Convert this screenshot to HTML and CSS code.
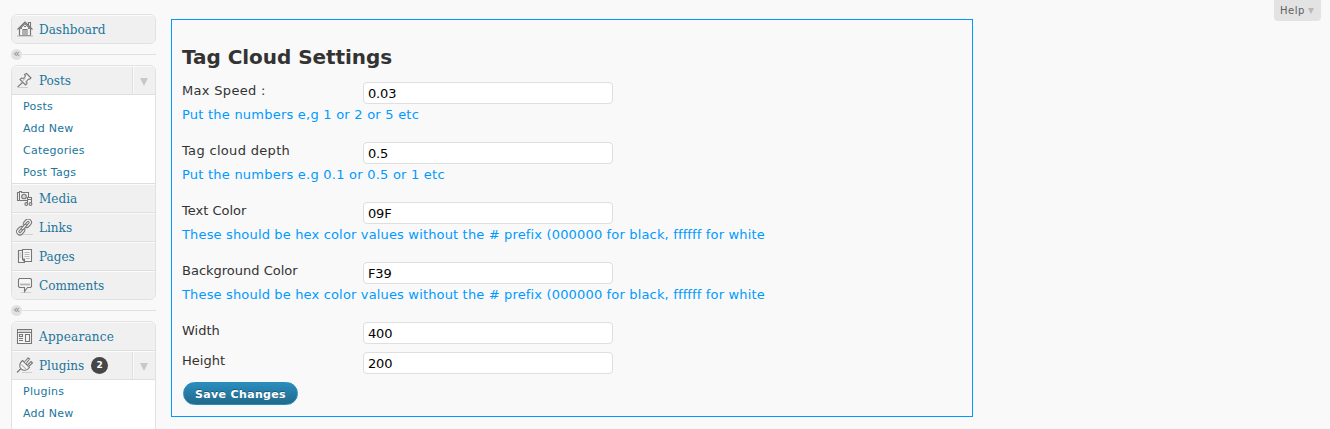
FILE: index.html
```html
<!DOCTYPE html>
<html lang="en">
<head>
<meta charset="utf-8">
<title>Tag Cloud Settings</title>
<link rel="stylesheet" href="styles.css">
</head>
<body>
<div class="page">
  <nav class="sidebar">
    <div class="menu">
      <a class="item">
        <svg class="icon" viewBox="0 0 18 18"><path class="fill" d="M3.500 9 9 3.500 14.500 9v6.500h-11z"/><path d="M1.500 9.500 9 2l7.500 7.500M3.500 8.500v7h11v-7M12.500 5V2.500h2V7M7 15.500V9.500h4v6M9 9.500v6M5 8.500h1M12 8.500h1M8 6.500h2"/><path class="soft" d="M1 16h16"/></svg>
        <span class="name">Dashboard</span>
      </a>
    </div>
    <div class="separator"><span class="fold">«</span></div>
    <div class="menu">
      <a class="item">
        <svg class="icon" viewBox="0 0 18 18"><path class="base" d="M2 15.500h10"/><path class="fill" d="M8.500 2.500 10.500 1.500l4.500 4.500-1.500 1.200-1-.2-2 2.500.5 2-1.500 1.500-5.500-5.500L5.500 6l2 .5 2-2.500z"/><path class="soft" d="M7 8.500 9.500 6M9 10.500l2-2.500"/><path d="M6.500 10.500 1.500 15.200"/></svg>
        <span class="name">Posts</span><span class="toggle"></span>
      </a>
      <div class="submenu"><a>Posts</a><a>Add New</a><a>Categories</a><a>Post Tags</a></div>
      <a class="item">
        <svg class="icon" viewBox="0 0 18 18"><path class="fill" d="M1.500 2.500h2v-1h2v1h7v8h-11z"/><path d="M3.500 3v7"/><circle class="shade" cx="8" cy="6.500" r="2.300"/><path class="fill" d="M11.500 14V7.500h4v6M11.500 9.500h4"/><circle class="fill" cx="10.300" cy="14" r="1.400"/><circle class="fill" cx="14.500" cy="14" r="1.400"/></svg>
        <span class="name">Media</span>
      </a>
      <a class="item">
        <svg class="icon" viewBox="0 0 18 18"><path class="base" d="M5 15.500h12"/><g transform="translate(-.5 -.5) rotate(-48 8.500 8.500)"><rect class="fill" x="-1" y="5.200" width="9" height="6.600" rx="3.300"/><rect x="1.200" y="7.500" width="4.800" height="2" rx="1"/><rect class="fill" x="9" y="5.200" width="9" height="6.600" rx="3.300"/><rect x="11" y="7.500" width="4.800" height="2" rx="1"/><rect class="fill" x="5.200" y="7.300" width="6.600" height="2.400" rx="1.200"/></g></svg>
        <span class="name">Links</span>
      </a>
      <a class="item">
        <svg class="icon" viewBox="0 0 18 18"><path class="fill" d="M2.500 2.500h6v12h-6z"/><path class="fill" d="M6.500 1.500h9v12h-7l-2-2zM6.500 11h2v2.500"/><path class="soft" d="M8.500 4.500h5M8.500 6.500h5M8.500 8.500h5M10 10.500h3.500M3.500 5h2M3.500 7h2M3.500 9h2"/></svg>
        <span class="name">Pages</span>
      </a>
      <a class="item">
        <svg class="icon" viewBox="0 0 18 18"><path class="base" d="M5 16.500h10"/><path class="fill" d="M3.500 2.500h11l1 1v7l-1 1H11.500L8.500 15.500v-4h-5l-1-1v-7z"/><path class="soft" d="M4 8h10M4 9h10"/></svg>
        <span class="name">Comments</span>
      </a>
    </div>
    <div class="separator"><span class="fold">«</span></div>
    <div class="menu">
      <a class="item">
        <svg class="icon" viewBox="0 0 18 18"><path class="fill" d="M1.500 1.500h14v14h-14z"/><path d="M1.500 4.500h14M9.500 6.500h4v7h-4zM3.500 6.500h3v2h-3zM3 10.500h4M3 12.500h4"/><path class="soft" d="M3 3h11"/></svg>
        <span class="name appearance">Appearance</span>
      </a>
      <a class="item">
        <svg class="icon" viewBox="0 0 18 18"><path class="base" d="M6 15.500h10"/><path d="M1 15.500 5 11.500"/><path class="fill" d="M6.500 3.500 13.500 10.500C11 13.500 7.500 14.200 5 11.800S4 5.500 6.500 3.500z"/><path class="fill" d="M8.500 5l3.500-4 1.500 1L10.200 6.500M11.500 8 15 4.500 16.500 6l-4 3.500"/><path class="soft" d="M5.500 7.500 9.800 11.800"/></svg>
        <span class="name">Plugins</span><span class="count">2</span><span class="toggle"></span>
      </a>
      <div class="submenu"><a>Plugins</a><a>Add New</a></div>
      <div class="submenu-rest"></div>
    </div>
  </nav>

  <main class="panel">
    <h2>Tag Cloud Settings</h2>
    <div class="row"><label class="wide">Max Speed :</label><input type="text" value="0.03"></div>
    <p class="hint wide">Put the numbers e,g 1 or 2 or 5 etc</p>
    <div class="row"><label class="wide">Tag cloud depth</label><input type="text" value="0.5"></div>
    <p class="hint wide">Put the numbers e.g 0.1 or 0.5 or 1 etc</p>
    <div class="row"><label>Text Color</label><input type="text" value="09F"></div>
    <p class="hint">These should be hex color values without the # prefix (000000 for black, ffffff for white</p>
    <div class="row"><label>Background Color</label><input type="text" value="F39"></div>
    <p class="hint">These should be hex color values without the # prefix (000000 for black, ffffff for white</p>
    <div class="row"><label>Width</label><input type="text" value="400"></div>
    <div class="row"><label>Height</label><input type="text" value="200"></div>
    <button class="save">Save Changes</button>
  </main>

  <a class="help">Help<span class="arrow"></span></a>
</div>
</body>
</html>
```
FILE: styles.css
```css
* { box-sizing: border-box; }
body {
  margin: 0;
  background: #f9f9f9;
  color: #333;
  font-family: Verdana, "DejaVu Sans", sans-serif;
}
.page {
  display: flex;
  align-items: flex-start;
  height: 429px;
  overflow: hidden;
}

/* Sidebar */
.sidebar { width: 145px; margin: 14px 15px 0 11px; flex: none; }
.menu {
  border: 1px solid #e1e1e1;
  border-radius: 6px;
  background: #fff;
  overflow: hidden;
}
.item {
  display: flex;
  align-items: center;
  height: 29px;
  padding-left: 4px;
  background: #f0f0f0;
  border-top: 1px solid #fbfbfb;
  border-bottom: 1px solid #dfdfdf;
}
.item:last-child { height: 28px; border-bottom: 0; }
.item:last-child .icon { margin-top: -1px; }
.icon {
  width: 18px;
  height: 18px;
  margin-right: 5px;
  fill: none;
  stroke: #777;
  stroke-width: 1.100;
}
.icon .fill { fill: #f6f6f6; }
.icon .shade { fill: #d6d6d6; }
.icon .soft { stroke: #b8b8b8; }
.icon .base { stroke: #cfcfcf; }
.name {
  padding-bottom: 1px;
  color: #21759b;
  font: 13.400px/19px "DejaVu Serif Condensed", "DejaVu Serif", serif;
  font-stretch: condensed;
}
.name.appearance { letter-spacing: .2px; }
.count {
  width: 17px;
  height: 17px;
  margin-left: 7px;
  border-radius: 50%;
  background: #464646;
  color: #fff;
  font-size: 9px;
  font-weight: bold;
  line-height: 17px;
  text-align: center;
}
.toggle {
  display: flex;
  align-items: center;
  justify-content: center;
  width: 23px;
  height: 27px;
  margin-left: auto;
  border-left: 1px solid #dfdfdf;
  box-shadow: inset 1px 0 #fafafa;
}
.toggle::before {
  content: "";
  margin-top: 3px;
  border: 4.500px solid transparent;
  border-top: 8px solid #c8c8c8;
  border-bottom: 0;
}
.submenu {
  display: flex;
  flex-direction: column;
  border-bottom: 1px solid #dfdfdf;
}
.submenu:nth-last-child(2) { border-bottom: 0; }
.submenu-rest { height: 22px; }
.submenu a {
  height: 22px;
  padding-left: 11px;
  color: #21759b;
  font-size: 11px;
  letter-spacing: .25px;
  line-height: 23px;
}
.submenu:nth-child(2):first-of-type { border-bottom: 1px solid #dfdfdf; }
.separator {
  display: flex;
  align-items: center;
  height: 21px;
}
.separator::after { content: ""; flex: 1; height: 1px; background: #e1e1e1; }
.fold {
  width: 11px;
  height: 11px;
  border-radius: 50%;
  background: #e1e1e1;
  color: #858585;
  font-size: 11px;
  line-height: 9px;
  text-align: center;
}

/* Settings form */
.panel {
  width: 802px;
  height: 398px;
  margin-top: 19px;
  padding: 24px 10px 0;
  border: 1px solid #0099ff;
}
.panel h2 {
  height: 34px;
  margin: 0;
  font-size: 20px;
  letter-spacing: -.05px;
  line-height: 26px;
}
.row {
  display: grid;
  grid-template-columns: 181px 250px;
  height: 30px;
}
.row label { font-size: 13px; line-height: 25px; }
.row input {
  height: 22px;
  margin-top: 4px;
  padding: 1px 4px 0;
  border: 1px solid #dfdfdf;
  border-radius: 4px;
  background: #fff;
  color: #000;
  font: 13px "DejaVu Sans", sans-serif;
  letter-spacing: -.15px;
}
.hint {
  height: 30px;
  margin: 0;
  color: #0099ff;
  font-size: 13px;
  letter-spacing: .16px;
  line-height: 14px;
  white-space: nowrap;
}
.hint.wide { letter-spacing: .23px; }
.row label.wide { letter-spacing: .32px; }
.save {
  display: block;
  width: 115px;
  height: 23px;
  margin: 4px 0 0 1px;
  padding: 1px 0 0;
  border: 1px solid #298cba;
  border-radius: 12px;
  background: linear-gradient(#2a8dbd, #21698b);
  color: #fff;
  font: bold 11px "DejaVu Sans", sans-serif;
  letter-spacing: .35px;
  text-shadow: 0 -1px 0 rgba(0, 0, 0, .3);
}

/* Help tab */
.help {
  display: flex;
  align-items: center;
  gap: 3px;
  width: 47px;
  height: 21px;
  margin: 0 9px 0 auto;
  padding-left: 6px;
  border-radius: 0 0 4px 4px;
  background: #e3e3e3;
  color: #606060;
  font-size: 10px;
  letter-spacing: .5px;
}
.arrow {
  border: 3.500px solid transparent;
  border-top: 6px solid #b8b8b8;
  border-bottom: 0;
}
```
